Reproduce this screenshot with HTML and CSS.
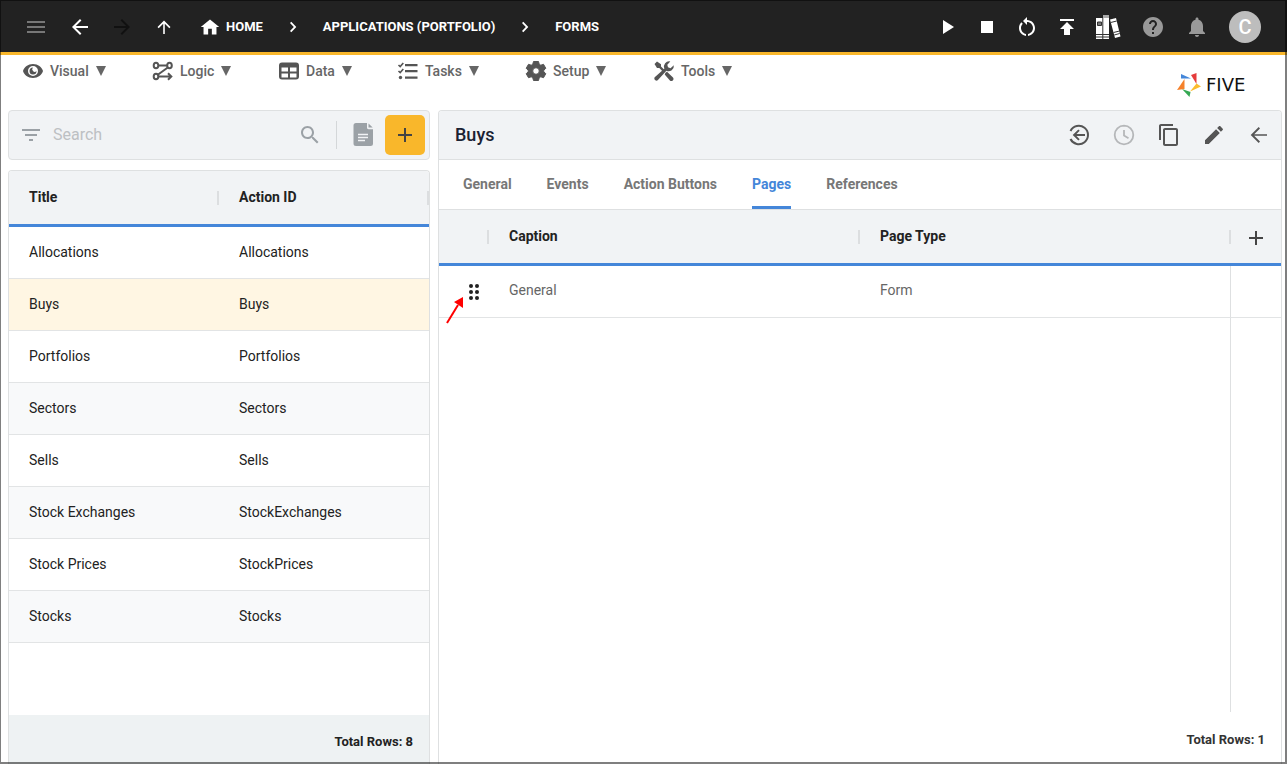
FILE: index.html
```html
<!DOCTYPE html>
<html lang="en">
  <head>
    <meta charset="utf-8">
    <title>Five | Forms</title>
    <link rel="stylesheet" href="styles.css">
  </head>
  <body>
    <header class="topbar">
      <button class="icon-btn menu-btn" aria-label="Menu"><svg viewBox="0 0 24 24"><path d="M3 18h18v-2H3v2zm0-5h18v-2H3v2zm0-7v2h18V6H3z"/></svg></button>
      <button class="icon-btn" aria-label="Back"><svg viewBox="0 0 24 24"><path d="M20 11H7.830l5.590-5.590L12 4l-8 8 8 8 1.410-1.410L7.830 13H20v-2z"/></svg></button>
      <button class="icon-btn off" aria-label="Forward"><svg viewBox="0 0 24 24"><path d="M12 4l-1.410 1.410L16.170 11H4v2h12.170l-5.580 5.590L12 20l8-8z"/></svg></button>
      <button class="icon-btn" aria-label="Up"><svg viewBox="0 0 24 24"><path d="M5.500 12l1.200 1.200 4.500-4.500V19h1.600V8.700l4.500 4.500 1.200-1.200L12 5.500z"/></svg></button>
      <nav class="crumbs">
        <a href="#" class="home"><svg viewBox="-1 -1 26 26"><path d="M10 20v-6h4v6h5v-8h3L12 4 2 12h3v8z"/></svg>HOME</a>
        <svg viewBox="0 0 24 24"><path d="M9 8l1.300-1.200 5 5.200-5 5.200L9 16l3.800-4z"/></svg>
        <a href="#">APPLICATIONS (PORTFOLIO)</a>
        <svg viewBox="0 0 24 24"><path d="M9 8l1.300-1.200 5 5.200-5 5.200L9 16l3.800-4z"/></svg>
        <a href="#">FORMS</a>
      </nav>
      <div class="actions">
        <button class="icon-btn" aria-label="Run"><svg viewBox="0 0 24 24"><path d="M8 5v14l11-7z"/></svg></button>
        <button class="icon-btn" aria-label="Stop"><svg viewBox="0 0 24 24"><path d="M6 6h12v12H6z"/></svg></button>
        <button class="icon-btn" aria-label="Restart"><svg viewBox="0 0 24 24"><path d="M12 5V2L8 6l4 4V7c3.310 0 6 2.690 6 6 0 2.970-2.170 5.430-5 5.910v2.020c3.950-.49 7-3.850 7-7.930 0-4.420-3.580-8-8-8zm-6 8c0-1.650.67-3.150 1.760-4.240L6.340 7.340C4.900 8.790 4 10.790 4 13c0 4.080 3.050 7.440 7 7.930v-2.020c-2.830-.48-5-2.940-5-5.910z"/></svg></button>
        <button class="icon-btn" aria-label="Deploy"><svg viewBox="0 0 24 24"><path d="M5 4v2h14V4H5zm0 10h4v6h6v-6h4l-7-7-7 7z"/></svg></button>
        <button class="icon-btn books" aria-label="Library">
          <svg viewBox="0 0 26 26">
            <path d="M1 4h7v21H1zM8 1h6v24H8zM15 5.500l6-1.500 4.500 18.500-5.500 1.500z"/>
            <path d="M8 1h6v3H8z" fill="#aaa"/>
            <path d="M2.500 8h4v3.500h-4zM7.800 4v21M1 20.500h13M1 23h13" fill="#777" stroke="#333"/>
            <path d="M15.700 8.500l6-1.500M19.200 21l5.500-1.500M18.500 18.500l6-1.500" stroke="#333"/>
          </svg>
        </button>
        <button class="icon-btn dim" aria-label="Help"><svg viewBox="0 0 24 24"><path d="M12 2C6.480 2 2 6.480 2 12s4.480 10 10 10 10-4.480 10-10S17.520 2 12 2zm1 17h-2v-2h2v2zm2.070-7.750l-.9.920C13.450 12.900 13 13.500 13 15h-2v-.5c0-1.100.45-2.100 1.170-2.830l1.240-1.260c.37-.36.59-.86.59-1.410 0-1.100-.9-2-2-2s-2 .9-2 2H8c0-2.210 1.790-4 4-4s4 1.790 4 4c0 .88-.36 1.680-.93 2.250z"/></svg></button>
        <button class="icon-btn dim" aria-label="Notifications"><svg viewBox="0 0 24 24"><path d="M12 22c1.100 0 2-.9 2-2h-4c0 1.100.89 2 2 2zm6-6v-5c0-3.070-1.640-5.640-4.500-6.320V4c0-.83-.67-1.500-1.500-1.500s-1.500.67-1.500 1.500v.68C7.630 5.360 6 7.920 6 11v5l-2 2v1h16v-1l-2-2z"/></svg></button>
        <button class="avatar">C</button>
      </div>
    </header>

    <div class="menubar">
      <nav class="menu">
        <button><svg viewBox="0 0 24 24"><path d="M12 5C7 5 3.200 8 2 12c1.200 4 5 7 10 7s8.800-3 10-7c-1.200-4-5-7-10-7zm0 12a5 5 0 1 1 0-10 5 5 0 0 1 0 10zm0-8.500A3.500 3.500 0 1 0 15.500 12 2 2 0 0 1 12 8.500z"/></svg>Visual <i></i></button>
        <button><svg viewBox="0 0 24 24" class="line"><ellipse cx="5" cy="6.500" rx="2.300" ry="2.800"/><ellipse cx="18.500" cy="6.500" rx="2.300" ry="2.800"/><ellipse cx="5" cy="17.500" rx="2.300" ry="2.800"/><path d="M7.500 6.500h8.500M16.800 8.500L6.800 15.800M7.500 17.500H20M17 14.300l3.300 3.200-3.300 3.200"/></svg>Logic <i></i></button>
        <button><svg viewBox="0 0 24 24"><path d="M5 3.500h14A3 3 0 0 1 22 6.500v11a3 3 0 0 1-3 3H5a3 3 0 0 1-3-3v-11a3 3 0 0 1 3-3zM4.500 8.500v4H11v-4zm8.500 0v4h6.500v-4zM4.500 14.500v4H11v-4zm8.500 0v4h6.500v-4z" fill-rule="evenodd"/></svg>Data <i></i></button>
        <button><svg viewBox="0 0 24 24"><path d="M9 5h12.500v2.200H9zM9 11h12.500v2.200H9zM9 17.500h12.500v2.200H9z"/><circle cx="4.500" cy="18.500" r="1.700"/><path d="M2.500 6l1.700 1.600L7.300 4M2.500 12l1.700 1.600L7.300 10" fill="none" stroke="currentColor" stroke-width="1.600"/></svg>Tasks <i></i></button>
        <button><svg viewBox="0 0 24 24"><path d="M9.500 2.500h5l.7 2.700 1.600 1 2.700-.9 2.300 4-2 1.900v1.600l2 1.900-2.300 4-2.700-.9-1.600 1-.7 2.700h-5l-.7-2.700-1.600-1-2.700.9-2.300-4 2-1.900v-1.600l-2-1.900 2.300-4 2.700.9 1.600-1zM12 8.700a3.300 3.300 0 1 0 0 6.600 3.300 3.300 0 0 0 0-6.600z" fill-rule="evenodd" stroke="currentColor" stroke-linejoin="round"/></svg>Setup <i></i></button>
        <button><svg viewBox="0 0 24 24"><path d="M2.500 5L5 2.500l4 2.700v2.300l3.300 3.300-1.600 1.600-3.400-3.300H5zM13.500 13.800l1.500-1 6 5.700c1 1.200.5 2.600-.5 3.200-1 .6-2 .3-2.600-.3l-5.200-5.800z"/><path d="M21.800 6.200l-3.300 3-2.500-.9-.7-2.500L18.300 2.500a5.300 5.300 0 0 0-6 7.200L2.700 18.300c-1.300 2 1.200 4.400 3 3l8.700-9.500a5.300 5.300 0 0 0 7.400-5.600z"/></svg>Tools <i></i></button>
      </nav>
      <a href="#" class="logo">
        <svg viewBox="0 0 24 24">
          <path d="M4 1l10 4.500H4z" fill="#4486d9"/>
          <path d="M19.500 0v11L14 2z" fill="#e53b3b"/>
          <path d="M24 13.500l-11 5 6.500-8z" fill="#fbbc2e"/>
          <path d="M12.500 24L5 16l8.500 3z" fill="#35a853"/>
          <path d="M7.500 6v10L0 17z" fill="#f5812b"/>
        </svg>FIVE</a>
    </div>

    <main>
      <section class="list">
        <div class="search">
          <svg viewBox="0 0 24 24"><path d="M10 18h4v-2h-4v2zM3 6v2h18V6H3zm3 7h12v-2H6v2z"/></svg>
          <input type="text" placeholder="Search" aria-label="Search">
          <svg viewBox="0 0 24 24"><path d="M15.500 14h-.79l-.28-.27C15.410 12.590 16 11.110 16 9.500 16 5.910 13.090 3 9.500 3S3 5.910 3 9.500 5.910 16 9.500 16c1.610 0 3.090-.59 4.230-1.570l.27.28v.79l5 4.990L20.490 19l-4.990-5zm-6 0C7.010 14 5 11.990 5 9.500S7.010 5 9.500 5 14 7.010 14 9.500 11.990 14 9.500 14z"/></svg>
          <button class="doc" aria-label="Report"><svg viewBox="0 0 24 26"><path d="M5 1h11v4.500c0 1 .6 1.700 1.500 1.700H22V21.500a2.500 2.500 0 0 1-2.500 2.500H5a2.500 2.500 0 0 1-2.500-2.500v-18A2.500 2.500 0 0 1 5 1zM17.500 1.500L21.700 5.500h-4.200z"/><path d="M7 12.500h10M7 15.500h10M7 18.500h7" stroke="#f1f3f5" stroke-width="1.500"/></svg></button>
          <button class="add" aria-label="Add"><svg viewBox="0 0 24 24"><path d="M19 13h-6v6h-2v-6H5v-2h6V5h2v6h6v2z"/></svg></button>
        </div>
        <div class="panel">
          <table>
            <thead>
              <tr><th>Title</th><th>Action ID</th></tr>
            </thead>
            <tbody>
              <tr><td>Allocations</td><td>Allocations</td></tr>
              <tr class="selected"><td>Buys</td><td>Buys</td></tr>
              <tr><td>Portfolios</td><td>Portfolios</td></tr>
              <tr><td>Sectors</td><td>Sectors</td></tr>
              <tr><td>Sells</td><td>Sells</td></tr>
              <tr><td>Stock Exchanges</td><td>StockExchanges</td></tr>
              <tr><td>Stock Prices</td><td>StockPrices</td></tr>
              <tr><td>Stocks</td><td>Stocks</td></tr>
            </tbody>
          </table>
          <div class="total">Total Rows: 8</div>
        </div>
      </section>

      <section class="panel detail">
        <div class="detail-head">
          <h1>Buys</h1>
          <button class="icon-btn" aria-label="Revert"><svg viewBox="0 0 24 24"><path d="M3.500 8A9.200 9.200 0 1 1 3.500 16" fill="none" stroke="currentColor" stroke-width="2"/><path d="M18 11H9.500l3.200-3.200-1.400-1.400L5.700 12l5.600 5.600 1.400-1.400L9.500 13H18z"/></svg></button>
          <button class="icon-btn faint" aria-label="History"><svg viewBox="0 0 24 24"><path d="M12 2.700a9.300 9.300 0 1 0 0 18.600 9.300 9.300 0 0 0 0-18.600zM12 7v5.500l4.500 2.700" fill="none" stroke="currentColor" stroke-width="1.800"/></svg></button>
          <button class="icon-btn" aria-label="Copy"><svg viewBox="0 0 24 24"><path d="M16 1H4c-1.100 0-2 .9-2 2v14h2V3h12V1zm3 4H8c-1.100 0-2 .9-2 2v14c0 1.100.9 2 2 2h11c1.100 0 2-.9 2-2V7c0-1.100-.9-2-2-2zm0 16H8V7h11v14z"/></svg></button>
          <button class="icon-btn" aria-label="Edit"><svg viewBox="0 0 24 24"><path d="M3 17.250V21h3.750L17.810 9.940l-3.750-3.750L3 17.250zM20.710 7.040c.39-.39.39-1.020 0-1.410l-2.340-2.340c-.39-.39-1.020-.39-1.410 0l-1.830 1.830 3.750 3.750 1.830-1.830z"/></svg></button>
          <button class="icon-btn" aria-label="Close"><svg viewBox="0 0 24 24"><path d="M20 11.200H7.200l5.800-5.800L11.700 4l-8 8 8 8 1.300-1.400-5.800-5.800H20z"/></svg></button>
        </div>
        <div class="tabs">
          <button>General</button>
          <button>Events</button>
          <button>Action Buttons</button>
          <button class="active">Pages</button>
          <button>References</button>
        </div>
        <table class="pages">
          <thead>
            <tr>
              <th class="narrow"></th>
              <th>Caption</th>
              <th>Page Type</th>
              <th class="narrow"><button class="icon-btn" aria-label="Add page"><svg viewBox="0 0 24 24"><path d="M19 13h-6v6h-2v-6H5v-2h6V5h2v6h6v2z"/></svg></button></th>
            </tr>
          </thead>
          <tbody>
            <tr>
              <td class="narrow drag">
                <svg viewBox="0 0 12 18" class="dots"><circle cx="3" cy="3" r="2"/><circle cx="9" cy="3" r="2"/><circle cx="3" cy="9" r="2"/><circle cx="9" cy="9" r="2"/><circle cx="3" cy="15" r="2"/><circle cx="9" cy="15" r="2"/></svg>
                <svg viewBox="0 0 18 28" class="pointer"><path d="M1 27L12 9" stroke="#f00" stroke-width="2"/><path d="M17 1v11L8 6z" fill="#f00"/></svg>
              </td>
              <td>General</td>
              <td>Form</td>
              <td class="narrow"></td>
            </tr>
          </tbody>
        </table>
        <div class="rest"></div>
        <div class="total">Total Rows: 1</div>
      </section>
    </main>
  </body>
</html>
```
FILE: styles.css
```css
* {box-sizing: border-box;}
body {margin: 0; height: 100vh; overflow: hidden; display: flex; flex-direction: column; font-family: Roboto, "Liberation Sans", sans-serif; font-size: 14px; line-height: 16px; color: #222; background-color: #fff;}
/* window frame */
body::after {content: ""; position: fixed; inset: 0; border: solid rgba(0,0,0,0.5); border-width: 1px 2px 2px 1px; pointer-events: none;}
button {border: none; background: none; padding: 0; font: inherit; color: inherit; cursor: pointer;}
a {color: inherit; text-decoration: none;}
svg {width: 24px; height: 24px; fill: currentColor; flex: none; display: block;}

.topbar {flex: none; height: 55px; display: flex; align-items: center; gap: 18px; padding: 2px 26px 0 24px; background-color: #222; border-bottom: 3px solid #f9b72b; color: #fff;}
.menu-btn {color: #777; margin-right: 2px;}
.off {color: #111;}
.dim {color: #999; margin-left: 4px;}
.crumbs {display: flex; align-items: center; gap: 18px; margin-left: 4px; font-size: 13px; font-weight: 700;}
.home {display: flex; align-items: center; gap: 4px;}
.actions {display: flex; align-items: center; gap: 16px; margin-left: auto;}
.books svg {width: 26px; height: 26px;}
.avatar {width: 32px; height: 32px; margin-left: 4px; border-radius: 50%; background-color: #bdbdbd; color: #fff; font-size: 20px; font-weight: 500;}

.menubar {flex: none; height: 55px; display: flex; justify-content: space-between; padding: 4px 22px 0 21px;}
.menu {display: grid; grid-template-columns: 130px 126px 119px 128px 128px auto; align-items: start; color: #666; font-weight: 500;}
.menu button {display: flex; align-items: center; gap: 5px; height: 24px;}
.menu svg {color: #555;}
.menu i {margin-left: 2px; border: 5px solid transparent; border-top: 10px solid #666; border-bottom: none;}
.line {fill: none; stroke: currentColor; stroke-width: 2;}
.logo {display: flex; align-items: center; gap: 5px; width: 88px; font-family: "DejaVu Sans", sans-serif; font-size: 18px; color: #111;}

main {flex: 1; min-height: 0; display: flex; gap: 8px; padding: 0 5px 0 8px;}
.list {flex: none; width: 422px; display: flex; flex-direction: column; gap: 10px;}
.search {flex: none; display: flex; align-items: center; height: 50px; padding: 4px 4px 4px 10px; border: 1px solid #dee0e1; border-radius: 4px; background-color: #f1f3f5; color: #9ba1a6;}
.search input {flex: 1; min-width: 0; padding: 0 10px 2px; border: none; outline: none; background: none; font: 16px Roboto, sans-serif;}
.search input::placeholder {color: #bdc0c3;}
.doc {margin: 0 10px 0 14px; padding-left: 14px; height: 28px; border-left: 1px solid #d4d7d9;}
.doc svg {height: 26px;}
.add {width: 40px; height: 40px; border-radius: 5px; background-color: #f9b72b; color: #444; display: grid; place-items: center;}

.panel {flex: 1; min-height: 0; display: flex; flex-direction: column; border: 1px solid #dee0e1; border-bottom: none; border-radius: 4px 4px 0 0; overflow: hidden;}
table {width: 100%; table-layout: fixed; border-spacing: 0; text-align: left;}
th {height: 56px; padding: 0 20px 2px; border-bottom: 3px solid #4486d9; font-weight: 700; background: #f1f3f5 linear-gradient(#dcdee0, #dcdee0) right center / 2px 14px no-repeat;}
td {height: 52px; padding: 0 20px 2px; border-bottom: 1px solid #e2e4e5;}
tbody tr:nth-child(even) {background-color: #f8f9fa;}
tbody .selected:nth-child(even) {background-color: #fff6e3;}
.total {margin-top: auto; padding: 19px 16px 14px; text-align: right; font-size: 13px; font-weight: 700; background-color: #eef2f3;}

.detail-head {display: flex; align-items: center; gap: 21px; height: 49px; padding: 0 10px 0 16px; background-color: #f1f3f5; border-bottom: 1px solid #dee0e1; color: #555;}
h1 {margin: 0 auto 0 0; font-size: 18px; line-height: 24px; font-weight: 500; color: #1a2233;}
.faint {color: #b5b7b9;}
.tabs {display: flex; gap: 35px; height: 50px; padding: 0 24px; border-bottom: 1px solid #dee0e1; color: #777; font-weight: 700;}
.tabs button {padding-bottom: 2px; border: solid transparent; border-width: 3px 0;}
.tabs .active {color: #4486d9; border-bottom-color: #4486d9;}
.pages td {padding-bottom: 4px; color: #666;}
.pages .narrow {width: 50px; padding: 0;}
.pages th:last-child {background-image: none; padding: 2px 0 0 13px;}
.pages .icon-btn {display: block; color: #444;}
.pages th:nth-child(3) {background-position: right center;}
.pages td:nth-child(3) {border-right: 1px solid #dee0e1;}
.drag {position: relative;}
.dots {width: 12px; height: 18px; margin-left: 29px; color: #222;}
.pointer {position: absolute; left: 7px; top: 30px; width: 18px; height: 28px;}
.rest {flex: 1; margin-right: 50px; border-right: 1px solid #dee0e1;}
.detail .total {margin-top: 0; padding: 20px 16px 16px; background: none; color: #333;}
```
